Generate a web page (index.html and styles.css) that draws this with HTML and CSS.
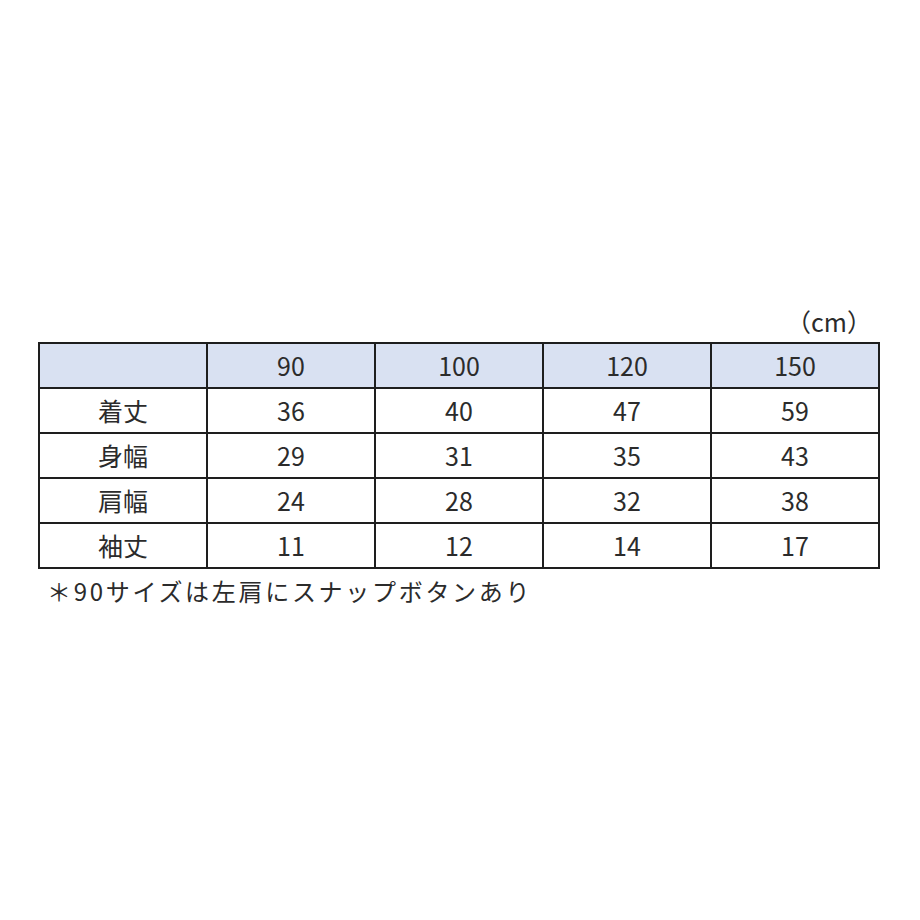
FILE: index.html
```html
<!DOCTYPE html>
<html lang="ja">
<head>
<meta charset="utf-8">
<link rel="stylesheet" href="styles.css">
</head>
<body>
<div class="page">
  <div class="unit">（cm）</div>
  <table class="size">
    <thead>
      <tr><th></th><th>90</th><th>100</th><th>120</th><th>150</th></tr>
    </thead>
    <tbody>
      <tr><td>着丈</td><td>36</td><td>40</td><td>47</td><td>59</td></tr>
      <tr><td>身幅</td><td>29</td><td>31</td><td>35</td><td>43</td></tr>
      <tr><td>肩幅</td><td>24</td><td>28</td><td>32</td><td>38</td></tr>
      <tr><td>袖丈</td><td>11</td><td>12</td><td>14</td><td>17</td></tr>
    </tbody>
  </table>
  <div class="note">＊90サイズは左肩にスナップボタンあり</div>
</div>
</body>
</html>
```
FILE: styles.css
```css
html, body {
  margin: 0;
  padding: 0;
  background: #fff;
}
body {
  font-family: "Noto Sans CJK JP", "Noto Sans", sans-serif;
  color: #2b2b2b;
}
.page {
  width: 842px;
  margin-left: 38px;
  padding-top: 305px;
}
.unit {
  text-align: right;
  font-size: 25px;
  line-height: 32px;
  padding-right: 8px;
  height: 37px;
}
.size {
  width: 842px;
  border-collapse: collapse;
  table-layout: fixed;
  font-size: 25px;
}
.size th, .size td {
  border: 2px solid #1e1e1e;
  height: 43px;
  padding: 0;
  text-align: center;
  font-weight: normal;
  line-height: 43px;
}
.size thead th {
  background: #d9e1f2;
}
.note {
  font-size: 24px;
  letter-spacing: 2.7px;
  line-height: 30px;
  padding-top: 7px;
  padding-left: 9px;
}
```
